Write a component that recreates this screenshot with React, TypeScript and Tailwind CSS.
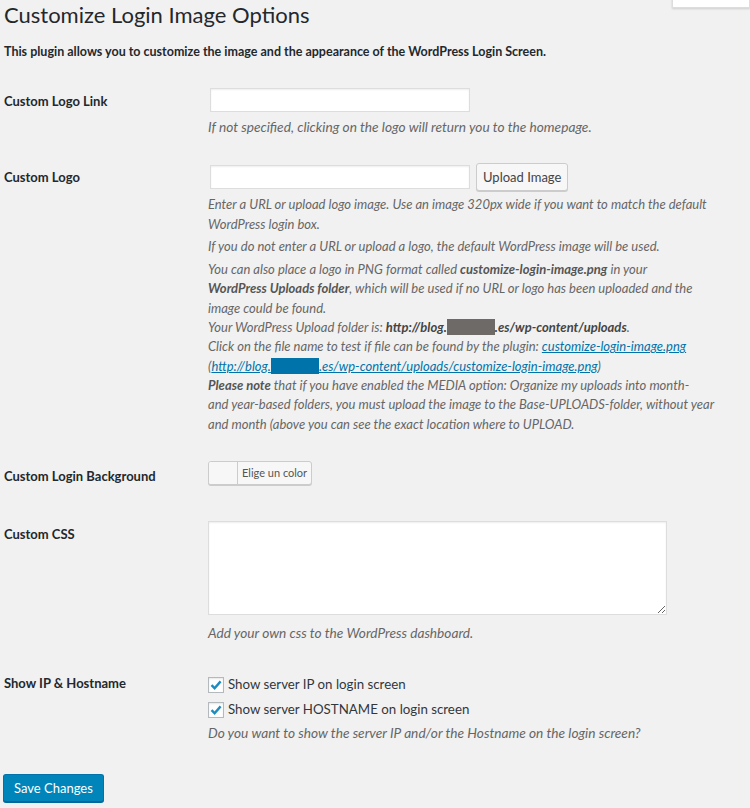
import React from 'react'

const font = { fontFamily: 'Lato, "Open Sans", sans-serif' }

const Desc = ({ children, className = '' }: { children: React.ReactNode; className?: string }) => (
  <p className={`italic leading-[19.3px] text-[#666] ${className}`}>{children}</p>
)

const Redacted = ({ blue = false }: { blue?: boolean }) => (
  <span className={`inline-block w-[48px] h-[16px] align-[-3px] ${blue ? 'bg-[#0073aa]' : 'bg-[#6d6a68]'}`} />
)

const Check = ({ label }: { label: string }) => (
  <label className="flex items-center h-[20px] text-[13.3px] text-[#32373c]">
    <span className="flex items-center justify-center w-[16px] h-[16px] bg-white border border-[#b4b9be] shadow-[inset_0_1px_2px_rgba(0,0,0,0.1)] mr-[4px]">
      <svg width="14" height="14" viewBox="0 0 14 14">
        <path d="M2.5 7.2 L5.6 10.2 L11.6 3.4" fill="none" stroke="#1e8cbe" strokeWidth="2.4" />
      </svg>
    </span>
    {label}
  </label>
)

export default function App() {
  return (
    <div className="relative min-h-[808px] bg-[#f1f1f1] text-[#23282d] overflow-hidden" style={font}>
      <div className="absolute right-0 top-[-12px] w-[78px] h-[20px] bg-white shadow-[0_1px_2px_rgba(0,0,0,0.15)] border border-[#ddd]" />
      <div className="pl-[4px]">
        <h1 className="text-[22px] leading-[30px] font-normal text-[#23282d]">Customize Login Image Options</h1>
        <p className="mt-[12px] text-[12.5px] leading-[20px] font-bold">
          This plugin allows you to customize the image and the appearance of the WordPress Login Screen.
        </p>
      </div>

      <div className="flex flex-col">
        {/* logo link */}
        <div className="flex mt-[26px]">
          <div className="w-[206px] pl-[4px] pt-[3px] text-[13px] leading-[20px] font-bold">Custom Logo Link</div>
          <div className="flex-1">
            <input className="block w-[260px] h-[24px] bg-white border border-[#ddd] shadow-[inset_0_1px_2px_rgba(0,0,0,0.07)] ml-[4px]" />
            <Desc className="mt-[5px] ml-[2px] text-[13.7px]">If not specified, clicking on the logo will return you to the homepage.</Desc>
          </div>
        </div>

        {/* logo */}
        <div className="flex mt-[27px]">
          <div className="w-[206px] pl-[4px] pt-[4px] text-[13px] leading-[20px] font-bold">Custom Logo</div>
          <div className="flex-1 ml-[2px] text-[13px]">
            <div className="flex items-center gap-[6px] ml-[2px]">
              <input className="block w-[260px] h-[24px] bg-white border border-[#ddd] shadow-[inset_0_1px_2px_rgba(0,0,0,0.07)]" />
              <button className="h-[28px] px-[6px] bg-[#f7f7f7] border border-[#ccc] rounded-[3px] shadow-[0_1px_0_#ccc] text-[13px] text-[#444]">
                Upload Image
              </button>
            </div>
            <Desc className="mt-[4px]">
              Enter a URL or upload logo image. Use an image 320px wide if you want to match the default
              <br />
              WordPress login box.
            </Desc>
            <Desc className="mt-[3.5px]">If you do not enter a URL or upload a logo, the default WordPress image will be used.</Desc>
            <Desc className="mt-[3.5px]">
              You can also place a logo in PNG format called <b className="font-bold text-[#555]">customize-login-image.png</b> in your
              <br />
              <b className="font-bold text-[#555]">WordPress Uploads folder</b>, which will be used if no URL or logo has been uploaded and the
              <br />
              image could be found.
              <br />
              Your WordPress Upload folder is: <b className="font-bold text-[#444]">http://blog.<Redacted />.es/wp-content/uploads</b>.
              <br />
              Click on the file name to test if file can be found by the plugin:{' '}
              <a href="#" className="text-[#0073aa] underline">customize-login-image.png</a>
              <br />
              (<a href="#" className="text-[#0073aa] underline">http://blog.<Redacted blue />.es/wp-content/uploads/customize-login-image.png</a>)
              <br />
              <b className="font-bold text-[#555]">Please note</b> that if you have enabled the MEDIA option: Organize my uploads into month-
              <br />
              and year-based folders, you must upload the image to the Base-UPLOADS-folder, without year
              <br />
              and month (above you can see the exact location where to UPLOAD.
            </Desc>
          </div>
        </div>

        {/* background */}
        <div className="flex mt-[27px]">
          <div className="w-[206px] pl-[4px] pt-[5px] text-[13px] leading-[20px] font-bold">Custom Login Background</div>
          <div className="flex-1">
            <button className="ml-[2px] flex h-[24px] bg-[#f7f7f7] border border-[#ccc] rounded-[3px] shadow-[0_1px_0_#ccc] overflow-hidden">
              <span className="w-[29px] h-full bg-[#f7f7f7] border-r border-[#ccc]" />
              <span className="px-[4px] text-[11px] leading-[22px] text-[#555]">Elige un color</span>
            </button>
          </div>
        </div>

        {/* css */}
        <div className="flex mt-[35px]">
          <div className="w-[206px] pl-[4px] pt-[3px] text-[13px] leading-[20px] font-bold">Custom CSS</div>
          <div className="flex-1">
            <textarea className="block ml-[2px] w-[459px] h-[94px] bg-white border border-[#ddd] shadow-[inset_0_1px_2px_rgba(0,0,0,0.07)]" />
            <Desc className="mt-[8px] ml-[2px] text-[13.7px]">Add your own css to the WordPress dashboard.</Desc>
          </div>
        </div>

        {/* ip */}
        <div className="flex mt-[31px]">
          <div className="w-[206px] pl-[4px] text-[13px] leading-[20px] font-bold">Show IP &amp; Hostname</div>
          <div className="flex-1 ml-[2px]">
            <div className="mt-[2px]">
              <Check label="Show server IP on login screen" />
            </div>
            <div className="mt-[5px]">
              <Check label="Show server HOSTNAME on login screen" />
            </div>
            <Desc className="mt-[3px] text-[13.7px]">Do you want to show the server IP and/or the Hostname on the login screen?</Desc>
          </div>
        </div>

        <div className="mt-[32px] pl-[3px]">
          <button className="h-[28px] px-[10px] bg-[#0085ba] border border-[#0073aa] border-b-[#006799] rounded-[3px] shadow-[0_1px_0_#006799] text-[13px] text-white">
            Save Changes
          </button>
        </div>
      </div>
    </div>
  )
}
